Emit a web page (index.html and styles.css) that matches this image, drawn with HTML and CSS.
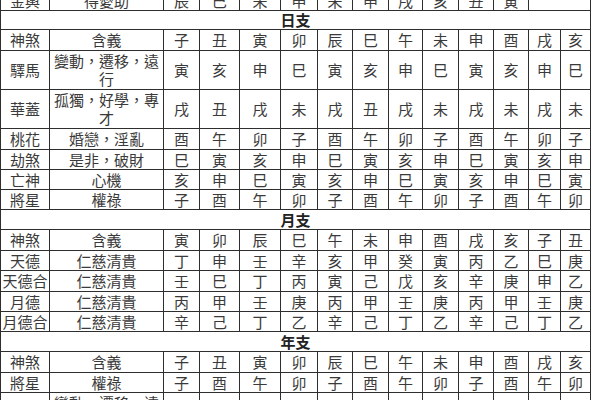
FILE: index.html
```html
<!DOCTYPE html>
<html lang="zh-Hant">
<head>
<meta charset="utf-8">
<title>神煞表</title>
<link rel="stylesheet" href="styles.css">
</head>
<body>
<table class="sha">
  <colgroup>
    <col class="w49"><col class="w114">
    <col class="w36"><col class="w40"><col class="w41"><col class="w37">
    <col class="w35"><col class="w36"><col class="w34"><col class="w36">
    <col class="w35"><col class="w35"><col class="w32"><col class="w30">
  </colgroup>
  <tbody>
    <tr class="h20"><td>金輿</td><td>得愛助</td><td>辰</td><td>巳</td><td>未</td><td>申</td><td>未</td><td>申</td><td>戌</td><td>亥</td><td>丑</td><td>寅</td><td colspan="2"></td></tr>

    <tr class="h19 head"><td colspan="14">日支</td></tr>
    <tr class="h21"><td>神煞</td><td>含義</td><td>子</td><td>丑</td><td>寅</td><td>卯</td><td>辰</td><td>巳</td><td>午</td><td>未</td><td>申</td><td>酉</td><td>戌</td><td>亥</td></tr>
    <tr class="h39"><td>驛馬</td><td class="mean">變動，遷移，遠行</td><td>寅</td><td>亥</td><td>申</td><td>巳</td><td>寅</td><td>亥</td><td>申</td><td>巳</td><td>寅</td><td>亥</td><td>申</td><td>巳</td></tr>
    <tr class="h39"><td>華蓋</td><td class="mean">孤獨，好學，專才</td><td>戌</td><td>丑</td><td>戌</td><td>未</td><td>戌</td><td>丑</td><td>戌</td><td>未</td><td>戌</td><td>未</td><td>戌</td><td>未</td></tr>
    <tr class="h21"><td>桃花</td><td>婚戀，淫亂</td><td>酉</td><td>午</td><td>卯</td><td>子</td><td>酉</td><td>午</td><td>卯</td><td>子</td><td>酉</td><td>午</td><td>卯</td><td>子</td></tr>
    <tr class="h20"><td>劫煞</td><td>是非，破財</td><td>巳</td><td>寅</td><td>亥</td><td>申</td><td>巳</td><td>寅</td><td>亥</td><td>申</td><td>巳</td><td>寅</td><td>亥</td><td>申</td></tr>
    <tr class="h20"><td>亡神</td><td>心機</td><td>亥</td><td>申</td><td>巳</td><td>寅</td><td>亥</td><td>申</td><td>巳</td><td>寅</td><td>亥</td><td>申</td><td>巳</td><td>寅</td></tr>
    <tr class="h20"><td>將星</td><td>權祿</td><td>子</td><td>酉</td><td>午</td><td>卯</td><td>子</td><td>酉</td><td>午</td><td>卯</td><td>子</td><td>酉</td><td>午</td><td>卯</td></tr>

    <tr class="h20 head"><td colspan="14">月支</td></tr>
    <tr class="h21"><td>神煞</td><td>含義</td><td>寅</td><td>卯</td><td>辰</td><td>巳</td><td>午</td><td>未</td><td>申</td><td>酉</td><td>戌</td><td>亥</td><td>子</td><td>丑</td></tr>
    <tr class="h20"><td>天德</td><td>仁慈清貴</td><td>丁</td><td>申</td><td>壬</td><td>辛</td><td>亥</td><td>甲</td><td>癸</td><td>寅</td><td>丙</td><td>乙</td><td>巳</td><td>庚</td></tr>
    <tr class="h21"><td>天德合</td><td>仁慈清貴</td><td>壬</td><td>巳</td><td>丁</td><td>丙</td><td>寅</td><td>己</td><td>戊</td><td>亥</td><td>辛</td><td>庚</td><td>申</td><td>乙</td></tr>
    <tr class="h20"><td>月德</td><td>仁慈清貴</td><td>丙</td><td>甲</td><td>壬</td><td>庚</td><td>丙</td><td>甲</td><td>壬</td><td>庚</td><td>丙</td><td>甲</td><td>壬</td><td>庚</td></tr>
    <tr class="h20"><td>月德合</td><td>仁慈清貴</td><td>辛</td><td>己</td><td>丁</td><td>乙</td><td>辛</td><td>己</td><td>丁</td><td>乙</td><td>辛</td><td>己</td><td>丁</td><td>乙</td></tr>

    <tr class="h20 head"><td colspan="14">年支</td></tr>
    <tr class="h21"><td>神煞</td><td>含義</td><td>子</td><td>丑</td><td>寅</td><td>卯</td><td>辰</td><td>巳</td><td>午</td><td>未</td><td>申</td><td>酉</td><td>戌</td><td>亥</td></tr>
    <tr class="h20"><td>將星</td><td>權祿</td><td>子</td><td>酉</td><td>午</td><td>卯</td><td>子</td><td>酉</td><td>午</td><td>卯</td><td>子</td><td>酉</td><td>午</td><td>卯</td></tr>
    <tr class="h39"><td>驛馬</td><td class="mean">變動，遷移，遠行</td><td>寅</td><td>亥</td><td>申</td><td>巳</td><td>寅</td><td>亥</td><td>申</td><td>巳</td><td>寅</td><td>亥</td><td>申</td><td>巳</td></tr>
  </tbody>
</table>
</body>
</html>
```

FILE: styles.css
```css
html, body {
  margin: 0;
  padding: 0;
  background: #ffffff;
  overflow: hidden;
}

.sha {
  width: 590px;
  margin-top: -10px;
  border-collapse: collapse;
  table-layout: fixed;
  font-family: "Noto Sans CJK TC", "Noto Sans CJK SC", sans-serif;
  font-size: 15px;
  line-height: 18px;
  color: #3a3a3a;
}

.sha td {
  border: 1px solid #2e2e2e;
  padding: 0;
  text-align: center;
  vertical-align: middle;
  overflow: hidden;
  white-space: nowrap;
}

.sha td.mean {
  white-space: normal;
  padding: 0 4px;
}

.head td {
  font-weight: bold;
  color: #222;
}

.h19 { height: 19px; }
.h20 { height: 20px; }
.h21 { height: 21px; }
.h39 { height: 39px; }

.w49 { width: 49px; }
.w114 { width: 114px; }
.w30 { width: 30px; }
.w32 { width: 32px; }
.w34 { width: 34px; }
.w35 { width: 35px; }
.w36 { width: 36px; }
.w37 { width: 37px; }
.w40 { width: 40px; }
.w41 { width: 41px; }
```
